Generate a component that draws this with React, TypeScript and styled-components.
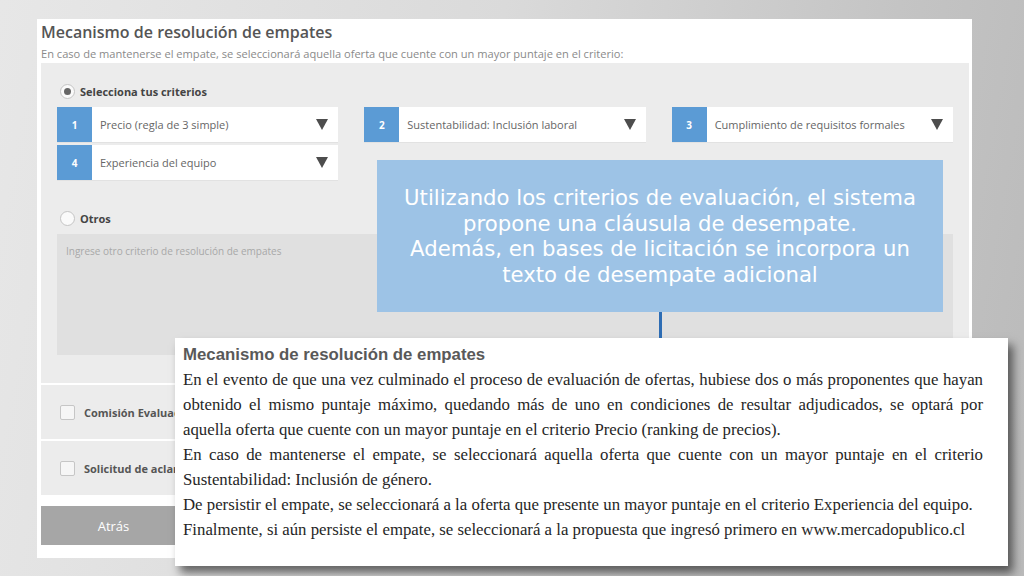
import styled, { createGlobalStyle } from "styled-components";

const GlobalStyle = createGlobalStyle`
    html, body {
        margin: 0;
        padding: 0;
    }
    body {
        font-family: "Open Sans", "Liberation Sans", sans-serif;
    }
`;

const Slide = styled.div`
    position: relative;
    width: 1024px;
    height: 576px;
    overflow: hidden;
    box-sizing: border-box;
    padding: 19px 0 0 37px;
    background: linear-gradient(100deg, #e7e7e7 0%, #dadada 45%, #c4c4c4 80%, #bababa 100%);
`;

const Panel = styled.div`
    width: 935px;
    height: 539px;
    box-sizing: border-box;
    background: #fff;
    padding: 1px 3px 0 4px;
    display: flex;
    flex-direction: column;
`;

const Title = styled.h2`
    margin: 0;
    font-size: 16px;
    line-height: 24px;
    font-weight: 600;
    color: #555;
`;

const Subtitle = styled.p`
    margin: 0;
    font-size: 11.1px;
    line-height: 19px;
    color: #8a8a8a;
`;

const Criteria = styled.div`
    background: #ececec;
    padding: 20px 16px 28px;
`;

const RadioRow = styled.label<{ $gap?: number }>`
    display: flex;
    align-items: center;
    gap: 5px;
    height: 16px;
    margin-left: 3px;
    margin-top: ${(p) => p.$gap ?? 0}px;
    margin-bottom: 8px;
    font-size: 11px;
    font-weight: 700;
    color: #444;
`;

const Radio = styled.span<{ $checked?: boolean }>`
    width: 13px;
    height: 13px;
    border-radius: 50%;
    border: 1px solid #c4c4c4;
    background: #fafafa;
    display: flex;
    align-items: center;
    justify-content: center;
    &::after {
        content: "";
        width: 7px;
        height: 7px;
        border-radius: 50%;
        background: ${(p) => (p.$checked ? "#666" : "transparent")};
    }
`;

const SelectGrid = styled.div`
    display: grid;
    grid-template-columns: repeat(3, 1fr);
    column-gap: 26px;
    row-gap: 2px;
`;

const Select = styled.div`
    display: flex;
    height: 36px;
    background: #fff;
    border-bottom: 1px solid #e2e2e2;
    box-sizing: border-box;
`;

const SelectNum = styled.span`
    width: 35px;
    flex-shrink: 0;
    background: #5b9bd5;
    color: #fff;
    font-size: 10px;
    font-weight: 700;
    display: flex;
    align-items: center;
    justify-content: center;
`;

const SelectText = styled.span`
    flex: 1;
    padding-left: 8px;
    font-size: 11px;
    color: #666;
    display: flex;
    align-items: center;
`;

const Arrow = styled.span`
    width: 0;
    height: 0;
    border-left: 6px solid transparent;
    border-right: 6px solid transparent;
    border-top: 11px solid #4d4d4d;
    align-self: center;
    margin-right: 10px;
`;

const TextArea = styled.div`
    height: 121px;
    background: #e0e0e0;
    padding: 10px 9px;
    box-sizing: border-box;
    font-size: 10px;
    color: #a8a8a8;
`;

const OptionRow = styled.div`
    display: flex;
    align-items: center;
    gap: 9px;
    height: 54px;
    margin-top: 2px;
    padding-left: 19px;
    background: #ececec;
    font-size: 11px;
    font-weight: 700;
    color: #555;
`;

const Checkbox = styled.span`
    width: 13px;
    height: 13px;
    border: 1px solid #c6c6c6;
    border-radius: 2px;
    background: #f6f6f6;
`;

const BackButton = styled.button`
    margin-top: 11px;
    width: 145px;
    height: 39px;
    border: none;
    background: #a6a6a6;
    color: #fff;
    font-family: "Open Sans", "Liberation Sans", sans-serif;
    font-size: 13px;
`;

const Callout = styled.div`
    position: absolute;
    left: 377px;
    top: 160px;
    width: 566px;
    height: 152px;
    background: #9dc3e6;
    display: flex;
    align-items: center;
    justify-content: center;
    text-align: center;
    font-family: "DejaVu Sans", "Open Sans", sans-serif;
    font-size: 21.2px;
    line-height: 25.5px;
    color: #fff;
`;

const Connector = styled.span`
    position: absolute;
    left: 659px;
    top: 312px;
    width: 3px;
    height: 27px;
    background: #2e6db4;
`;

const Popup = styled.div`
    position: absolute;
    left: 175px;
    top: 338px;
    width: 833px;
    height: 228px;
    box-sizing: border-box;
    padding: 5px 25px 0 8px;
    background: #fff;
    box-shadow: 5px 7px 9px rgba(0, 0, 0, 0.55);
`;

const PopupTitle = styled.div`
    font-family: "Liberation Sans", Arial, sans-serif;
    font-weight: 700;
    font-size: 16.8px;
    line-height: 24px;
    color: #595959;
`;

const PopupLine = styled.div<{ $justify?: boolean }>`
    font-family: "Liberation Serif", "Times New Roman", serif;
    font-size: 16.8px;
    line-height: 25px;
    color: #262626;
    white-space: nowrap;
    text-align: ${(p) => (p.$justify ? "justify" : "left")};
    text-align-last: ${(p) => (p.$justify ? "justify" : "left")};
`;

const criterios = [
    { n: 1, label: "Precio (regla de 3 simple)" },
    { n: 2, label: "Sustentabilidad: Inclusión laboral" },
    { n: 3, label: "Cumplimiento de requisitos formales" },
    { n: 4, label: "Experiencia del equipo" },
];

const lines: { text: string; justify?: boolean }[] = [
    { text: "En el evento de que una vez culminado el proceso de evaluación de ofertas, hubiese dos o más proponentes que hayan", justify: true },
    { text: "obtenido el mismo puntaje máximo, quedando más de uno en condiciones de resultar adjudicados, se optará por", justify: true },
    { text: "aquella oferta que cuente con un mayor puntaje en el criterio Precio (ranking de precios)." },
    { text: "En caso de mantenerse el empate, se seleccionará aquella oferta que cuente con un mayor puntaje en el criterio", justify: true },
    { text: "Sustentabilidad: Inclusión de género." },
    { text: "De persistir el empate, se seleccionará a la oferta que presente un mayor puntaje en el criterio Experiencia del equipo." },
    { text: "Finalmente, si aún persiste el empate, se seleccionará a la propuesta que ingresó primero en www.mercadopublico.cl" },
];

export default function App() {
    return (<>
        <GlobalStyle />
        <Slide>
            <Panel>
                <Title>Mecanismo de resolución de empates</Title>
                <Subtitle>
                    En caso de mantenerse el empate, se seleccionará aquella oferta que cuente con un mayor puntaje en el criterio:
                </Subtitle>
                <Criteria>
                    <RadioRow>
                        <Radio $checked />
                        Selecciona tus criterios
                    </RadioRow>
                    <SelectGrid>
                        {criterios.map((c) => (
                            <Select key={c.n}>
                                <SelectNum>{c.n}</SelectNum>
                                <SelectText>{c.label}</SelectText>
                                <Arrow />
                            </Select>
                        ))}
                    </SelectGrid>
                    <RadioRow $gap={29}>
                        <Radio />
                        Otros
                    </RadioRow>
                    <TextArea>Ingrese otro criterio de resolución de empates</TextArea>
                </Criteria>
                <OptionRow>
                    <Checkbox />
                    Comisión Evaluadora
                </OptionRow>
                <OptionRow>
                    <Checkbox />
                    Solicitud de aclaraciones
                </OptionRow>
                <BackButton>Atrás</BackButton>
            </Panel>

            <Callout>
                <div>
                    Utilizando los criterios de evaluación, el sistema<br />
                    propone una cláusula de desempate.<br />
                    Además, en bases de licitación se incorpora un<br />
                    texto de desempate adicional
                </div>
            </Callout>
            <Connector />

            <Popup>
                <PopupTitle>Mecanismo de resolución de empates</PopupTitle>
                {lines.map((l, i) => (
                    <PopupLine key={i} $justify={l.justify}>{l.text}</PopupLine>
                ))}
            </Popup>
        </Slide>
    </>);
}
